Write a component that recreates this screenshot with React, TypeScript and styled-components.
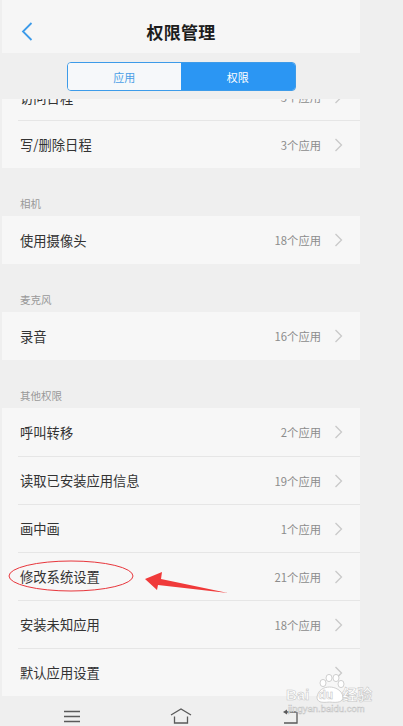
import styled, { createGlobalStyle } from "styled-components";

const GlobalStyle = createGlobalStyle`
    body {
        margin: 0;
        background: #efefef;
        font-family: "Noto Sans CJK SC", "Noto Sans", sans-serif;
    }
`;

type Item = { title: string; count?: string };

const sections: { label: string; items: Item[] }[] = [
    { label: "相机", items: [{ title: "使用摄像头", count: "18个应用" }] },
    { label: "麦克风", items: [{ title: "录音", count: "16个应用" }] },
    {
        label: "其他权限",
        items: [
            { title: "呼叫转移", count: "2个应用" },
            { title: "读取已安装应用信息", count: "19个应用" },
            { title: "画中画", count: "1个应用" },
            { title: "修改系统设置", count: "21个应用" },
            { title: "安装未知应用", count: "18个应用" },
            { title: "默认应用设置" },
        ],
    },
];

const Chevron = () => (
    <svg width="9" height="14" viewBox="0 0 9 14">
        <polyline points="1.5,1 7.5,7 1.5,13" fill="none" stroke="#c9c9c9" strokeWidth="1.3" />
    </svg>
);

const PermRow = ({ title, count }: Item) => (
    <Row>
        <RowTitle>{title}</RowTitle>
        {count && <RowCount>{count}</RowCount>}
        <Chevron />
    </Row>
);

export default function App() {
    return (
        <Screen>
            <GlobalStyle />
            <Content>
                <Header>
                    <BackButton>
                        <svg width="12" height="19" viewBox="0 0 12 19">
                            <polyline points="10.5,1 2,9.5 10.5,18" fill="none" stroke="#3d9be9" strokeWidth="1.8" />
                        </svg>
                    </BackButton>
                    <Title>权限管理</Title>
                    <span />
                </Header>
                <SegmentBar>
                    <Segment>
                        <SegmentItem>应用</SegmentItem>
                        <SegmentItem $active>权限</SegmentItem>
                    </Segment>
                </SegmentBar>
                <Panel>
                    <PartialClip>
                        <PartialInner>
                            <PermRow title="访问日程" count="3个应用" />
                        </PartialInner>
                    </PartialClip>
                    <Row $divided>
                        <RowTitle>写/删除日程</RowTitle>
                        <RowCount>3个应用</RowCount>
                        <Chevron />
                    </Row>
                </Panel>
                {sections.map((s) => (
                    <div key={s.label}>
                        <SectionLabel>{s.label}</SectionLabel>
                        <Panel>
                            {s.items.map((it) => (
                                <PermRow key={it.title} {...it} />
                            ))}
                        </Panel>
                    </div>
                ))}
            </Content>
            <NavBar>
                <svg width="22" height="16" viewBox="0 0 22 16">
                    <path d="M3 3.5H19M3 8.5H19M3 13.5H19" stroke="#5a5a5a" strokeWidth="1.3" />
                </svg>
                <svg width="22" height="16" viewBox="0 0 22 16">
                    <path d="M1 7L11 1L21 7M4.5 8.5V15H17.5V8.5" fill="none" stroke="#5a5a5a" strokeWidth="1.3" />
                </svg>
                <svg width="22" height="16" viewBox="0 0 22 16">
                    <path d="M18 4H7M18 4V15H5" fill="none" stroke="#5a5a5a" strokeWidth="1.3" />
                    <path d="M4 4L8 1.5V6.5Z" fill="#5a5a5a" />
                </svg>
            </NavBar>

            <Overlay width="403" height="726" viewBox="0 0 403 726">
                <ellipse cx="71" cy="576" rx="62" ry="15" fill="none" stroke="#e8363c" strokeWidth="1" />
                <polygon points="145,579 162,572 161,579 228,593 158,585 157,590" fill="#f03a3a" />
                <g fill="#ffffff" stroke="#c4c4c4" strokeWidth="0.8">
                    <ellipse cx="323" cy="683" rx="3" ry="3.6" />
                    <ellipse cx="329" cy="678" rx="3" ry="3.6" />
                    <ellipse cx="336" cy="678" rx="3" ry="3.6" />
                    <ellipse cx="341" cy="684" rx="3" ry="3.6" />
                    <path d="M317 697 C318 690 324 687 329.5 687 C335 687 342 690 343 697 C343 702 338 703 329.5 702 C321 703 317 702 317 697Z" />
                </g>
            </Overlay>
            <Watermark>
                <WmMain>
                    Bai<WmDu>du</WmDu>经验
                </WmMain>
                <WmSub>jingyan.baidu.com</WmSub>
            </Watermark>
        </Screen>
    );
}

const Screen = styled.div`
    position: relative;
    width: 403px;
    height: 726px;
    overflow: hidden;
    background: #efefef;
    display: flex;
    flex-direction: column;
`;

const Content = styled.div`
    width: 358px;
    margin-left: 2px;
    display: flex;
    flex-direction: column;
`;

const Header = styled.div`
    height: 53px;
    box-sizing: border-box;
    padding-top: 9px;
    background: #f6f6f6;
    display: grid;
    grid-template-columns: 60px 1fr 60px;
    align-items: center;
`;

const BackButton = styled.div`
    padding-left: 19px;
    display: flex;
    align-items: center;
`;

const Title = styled.div`
    text-align: center;
    font-size: 17px;
    font-weight: 700;
    color: #1d1d1d;
    letter-spacing: 0.3px;
`;

const SegmentBar = styled.div`
    height: 46px;
    box-sizing: border-box;
    padding-top: 9px;
    display: flex;
    justify-content: center;
    align-items: flex-start;
`;

const Segment = styled.div`
    width: 229px;
    height: 29px;
    box-sizing: border-box;
    border: 1px solid #3d9be9;
    border-radius: 4px;
    overflow: hidden;
    display: flex;
`;

const SegmentItem = styled.div<{ $active?: boolean }>`
    flex: 1;
    display: flex;
    align-items: center;
    justify-content: center;
    font-size: 11px;
    background: ${(p) => (p.$active ? "#2b96f3" : "#f6f8fa")};
    color: ${(p) => (p.$active ? "#ffffff" : "#4a9fe6")};
`;

const Panel = styled.div`
    background: #f7f7f7;
`;

const PartialClip = styled.div`
    height: 21px;
    overflow: hidden;
`;

const PartialInner = styled.div`
    margin-top: -26px;
`;

const Row = styled.div<{ $divided?: boolean }>`
    height: 48px;
    box-sizing: border-box;
    margin-left: 16px;
    padding: 0 17px 0 2px;
    display: flex;
    align-items: center;
    ${(p) => (p.$divided ? "border-top: 1px solid #e6e6e6;" : "")}
    & + & {
        border-top: 1px solid #e6e6e6;
    }
`;

const RowTitle = styled.div`
    flex: 1;
    font-size: 13.3px;
    color: #333333;
`;

const RowCount = styled.div`
    font-size: 11.3px;
    color: #8c8c8c;
    margin-right: 13px;
`;

const SectionLabel = styled.div`
    height: 48px;
    box-sizing: border-box;
    padding: 0 0 5px 18px;
    display: flex;
    align-items: flex-end;
    font-size: 10.5px;
    color: #999999;
`;

const NavBar = styled.div`
    height: 30px;
    box-sizing: border-box;
    padding: 12px 0 0 61px;
    display: flex;
    gap: 87px;
    align-items: flex-start;
`;

const Overlay = styled.svg`
    position: absolute;
    left: 0;
    top: 0;
    pointer-events: none;
`;

const Watermark = styled.div`
    position: absolute;
    left: 286px;
    top: 687px;
    display: flex;
    flex-direction: column;
    align-items: flex-start;
    color: #ffffff;
    font-family: "Liberation Sans", "Noto Sans CJK SC", sans-serif;
    -webkit-text-stroke: 0.5px #c2c2c2;
    pointer-events: none;
`;

const WmMain = styled.div`
    font-size: 15px;
    font-weight: 700;
    line-height: 16px;
    display: flex;
    align-items: center;
`;

const WmDu = styled.span`
    width: 27px;
    margin: 0 3px;
    text-align: center;
    font-size: 12px;
`;

const WmSub = styled.div`
    font-size: 9.5px;
    line-height: 12px;
    margin-left: 2px;
`;
